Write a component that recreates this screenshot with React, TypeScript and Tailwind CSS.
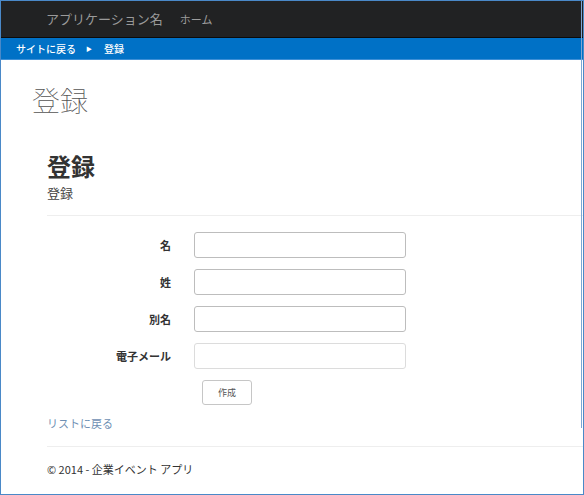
import React from 'react';

const jp = { fontFamily: '"Noto Sans CJK JP", "Noto Sans", "Liberation Sans", sans-serif' };

function Field({ label, light }: { label: string; light?: boolean }) {
  return (
    <div className="flex items-center h-[26px]">
      <label className="w-[124px] text-right text-[11px] font-bold text-[#333]">{label}</label>
      <input
        className={`ml-[23px] w-[212px] h-[26px] rounded-[3px] border bg-white ${light ? 'border-[#dcdcdc]' : 'border-[#bdbdbd]'}`}
      />
    </div>
  );
}

export default function App() {
  return (
    <div style={jp} className="relative w-[584px] h-[495px] overflow-hidden border border-[#4a89c8] bg-white flex flex-col">
      {/* navbar */}
      <div className="h-[37px] shrink-0 bg-[#212223] border-b border-[#0b0b0b] flex items-center pl-[45px]">
        <span className="text-[13px] text-[#9a9a9a]">アプリケーション名</span>
        <span className="ml-[17px] text-[11px] text-[#9d9d9d]">ホーム</span>
      </div>

      {/* breadcrumb */}
      <div className="h-[22px] shrink-0 bg-[#0071c6] border-b border-[#3d8fd6] flex items-center pl-[15px] text-white text-[10px] font-medium">
        <span>サイトに戻る</span>
        <span className="ml-[10px] text-[6px]">▶</span>
        <span className="ml-[12px]">登録</span>
      </div>

      <div className="pl-[31px]">
        <h1 className="mt-[23px] text-[28px] leading-[34px] font-thin text-[#555]">登録</h1>

        <div className="ml-[15px]">
          <h2 className="mt-[34px] text-[24px] leading-[30px] font-bold text-[#333]">登録</h2>
          <p className="mt-[3px] text-[13px] leading-[18px] text-[#444]">登録</p>
          <hr className="mt-[13px] border-t border-[#eeeeee]" />

          <div className="mt-[16px] flex flex-col gap-[11px]">
            <Field label="名" />
            <Field label="姓" />
            <Field label="別名" />
            <Field label="電子メール" light />
            <div className="flex pl-[155px]">
              <button className="w-[50px] h-[25px] rounded-[3px] border border-[#c6c6c6] bg-white text-[9px] text-[#555]">
                作成
              </button>
            </div>
          </div>

          <a className="block mt-[10px] text-[11px] leading-[16px] text-[#6e8fb3]">リストに戻る</a>
          <hr className="mt-[15px] border-t border-[#eeeeee]" />
          <p className="mt-[14px] text-[11px] leading-[16px] text-[#333]">© 2014 - 企業イベント アプリ</p>
        </div>
      </div>

      {/* scrollbar edge */}
      <div className="absolute right-[1px] top-0 h-[427px] w-[1px] bg-[#7ea6d3]" />
    </div>
  );
}
